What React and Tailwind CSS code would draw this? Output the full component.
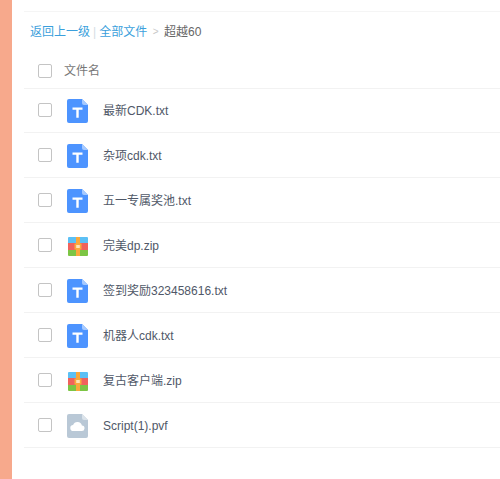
const FILES = [
  { name: "最新CDK.txt", type: "txt" },
  { name: "杂项cdk.txt", type: "txt" },
  { name: "五一专属奖池.txt", type: "txt" },
  { name: "完美dp.zip", type: "zip" },
  { name: "签到奖励323458616.txt", type: "txt" },
  { name: "机器人cdk.txt", type: "txt" },
  { name: "复古客户端.zip", type: "zip" },
  { name: "Script(1).pvf", type: "cloud" },
];

function TxtIcon() {
  return (
    <svg width="21" height="24" viewBox="0 0 21 24">
      <path d="M2 0h13l6 6v16a2 2 0 0 1-2 2H2a2 2 0 0 1-2-2V2a2 2 0 0 1 2-2z" fill="#4d94ff" />
      <path d="M15 0l6 6h-4a2 2 0 0 1-2-2z" fill="#a6caff" />
      <path d="M5.5 8.5h10v2.2h-3.8v8h-2.4v-8H5.5z" fill="#fff" />
    </svg>
  );
}

function ZipIcon() {
  return (
    <svg width="20" height="19" viewBox="0 0 20 19">
      <path d="M1 0h18a1 1 0 0 1 1 1v5H0V1a1 1 0 0 1 1-1z" fill="#5cc0f5" />
      <rect y="6" width="20" height="7" fill="#f0625c" />
      <path d="M0 13h20v5a1 1 0 0 1-1 1H1a1 1 0 0 1-1-1z" fill="#7cc544" />
      <rect x="8" width="4" height="19" fill="#f9a93c" />
      <rect x="6.5" y="6.5" width="7" height="6" fill="#f9a93c" />
      <rect x="8.2" y="8" width="3.6" height="3" fill="#fde4b8" />
    </svg>
  );
}

function CloudIcon() {
  return (
    <svg width="21" height="24" viewBox="0 0 21 24">
      <path d="M2 0h13l6 6v16a2 2 0 0 1-2 2H2a2 2 0 0 1-2-2V2a2 2 0 0 1 2-2z" fill="#b9c8d6" />
      <path d="M15 0l6 6h-4a2 2 0 0 1-2-2z" fill="#dbe3ea" />
      <path d="M6.5 17a3 3 0 0 1-.4-6 4.6 4.6 0 0 1 8.8.4 2.8 2.8 0 0 1-.4 5.6z" fill="#fff" />
    </svg>
  );
}

const ICONS = { txt: TxtIcon, zip: ZipIcon, cloud: CloudIcon };

function Checkbox() {
  return <span className="block w-[14px] h-[14px] rounded-[2px] border border-[#c4c4c4] bg-white shrink-0" />;
}

export default function App() {
  return (
    <div
      className="flex w-[500px] h-[479px] overflow-hidden bg-white"
      style={{ fontFamily: '"Liberation Sans", "Noto Sans CJK SC", sans-serif' }}
    >
      <div className="w-[12px] shrink-0 bg-[#f7a98c]" />
      <div className="flex-1 pl-[12px] pt-[11px]">
        <div className="border-t border-[#f5f5f5] h-[40px] pl-[6px] flex items-center text-[12px] text-[#666]">
          <span className="text-[#3b9fdc]">返回上一级</span>
          <span className="mx-[3px] text-[#d5dde3]">|</span>
          <span className="text-[#3b9fdc]">全部文件</span>
          <span className="mx-[5.5px] text-[#c8c8c8] text-[10px]">&gt;</span>
          <span>超越60</span>
        </div>
        <div className="h-[38px] pl-[14px] pt-[2px] flex items-center border-b border-[#f2f2f2] text-[12px] text-[#777]">
          <Checkbox />
          <span className="ml-[12px]">文件名</span>
        </div>
        {FILES.map((file, i) => {
          const Icon = ICONS[file.type];
          return (
            <div
              key={file.name}
              className={`${i === 0 ? "h-[44px] pb-[1px]" : "h-[45px]"} pl-[14px] flex items-center border-b border-[#f2f2f2]`}
            >
              <Checkbox />
              <div className="w-[21px] ml-[15px] mt-[2px] flex justify-center">
                <Icon />
              </div>
              <span className="ml-[15px] mt-[2px] text-[12px] text-[#505868]">{file.name}</span>
            </div>
          );
        })}
      </div>
    </div>
  );
}
